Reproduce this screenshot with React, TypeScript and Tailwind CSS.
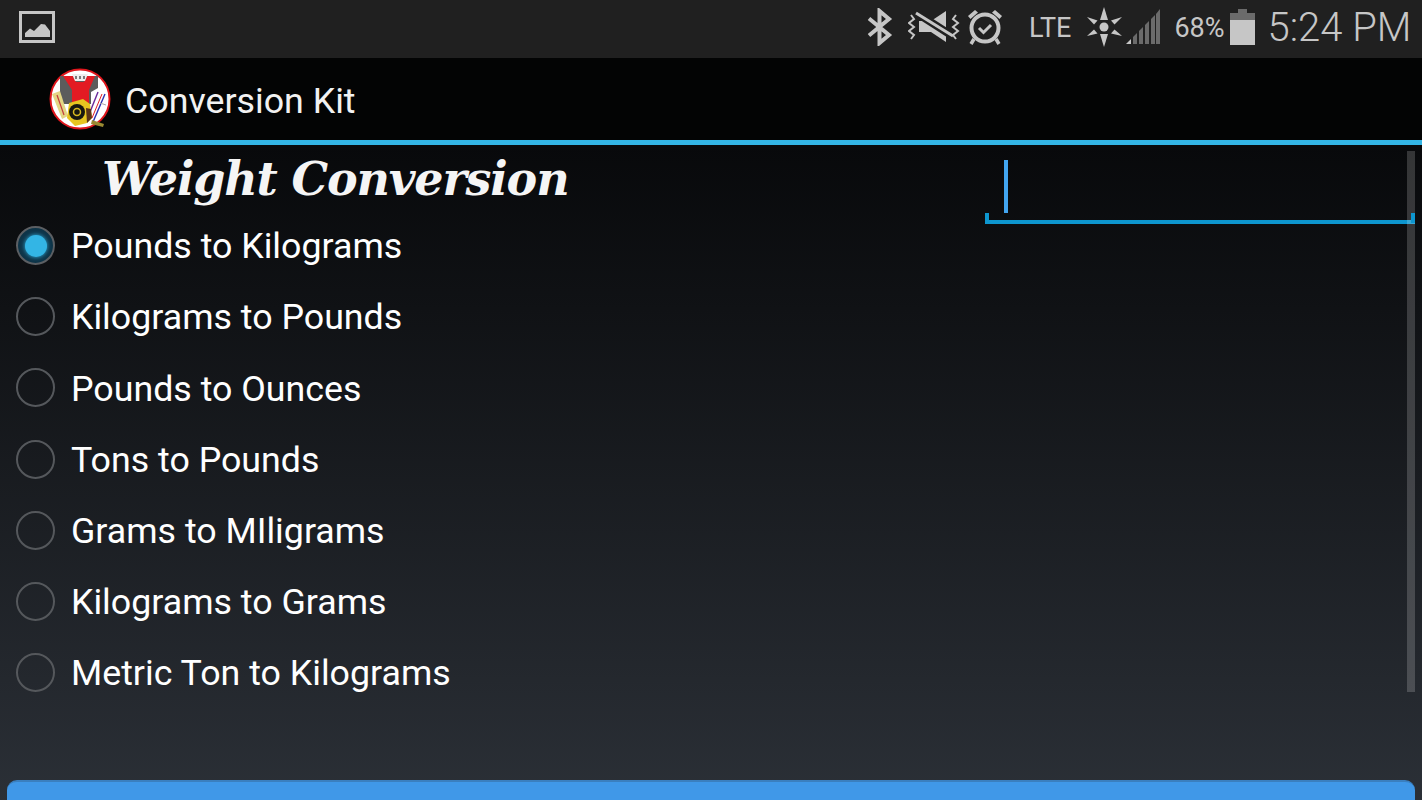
const options = [
  "Pounds to Kilograms",
  "Kilograms to Pounds",
  "Pounds to Ounces",
  "Tons to Pounds",
  "Grams to MIligrams",
  "Kilograms to Grams",
  "Metric Ton to Kilograms",
];

function ImageIcon() {
  return (
    <svg width="36" height="32" viewBox="0 0 36 32" className="block">
      <rect x="1.5" y="1.5" width="33" height="29" fill="none" stroke="#c6c6c6" strokeWidth="3" />
      <path d="M6 26V22L11 17.5L15 20L22 13L26 13.5L31 20V26Z" fill="#c6c6c6" />
    </svg>
  );
}

function BluetoothIcon() {
  return (
    <svg width="26" height="38" viewBox="0 0 26 38" className="block">
      <path
        d="M2 10.5L22 27L12.5 35V3L22 11L2 27.5"
        fill="none"
        stroke="#c6c6c6"
        strokeWidth="4"
      />
    </svg>
  );
}

function MuteVibrateIcon() {
  return (
    <svg width="52" height="32" viewBox="0 0 52 32" className="block">
      <path d="M11 10H23L38 0V31L23 21H11Z" fill="#c6c6c6" />
      <path d="M7 1L46 26" stroke="#202020" strokeWidth="8" />
      <path d="M8 2L45 25" stroke="#c6c6c6" strokeWidth="3" />
      <path
        d="M3 4L6 8L1 12L6 16L1 20L6 24L3 28"
        fill="none"
        stroke="#c6c6c6"
        strokeWidth="2"
      />
      <path
        d="M48 4L45 8L50 12L45 16L50 20L45 24L48 28"
        fill="none"
        stroke="#c6c6c6"
        strokeWidth="2"
      />
    </svg>
  );
}

function AlarmIcon() {
  return (
    <svg width="36" height="38" viewBox="0 0 36 38" className="block">
      <circle cx="18" cy="20" r="13.5" fill="none" stroke="#c6c6c6" strokeWidth="4" />
      <path d="M1 8L8 2L11 4.5L3.5 11Z" fill="#c6c6c6" />
      <path d="M35 8L28 2L25 4.5L32.5 11Z" fill="#c6c6c6" />
      <path d="M12 20L16.5 24.5L24 17" fill="none" stroke="#c6c6c6" strokeWidth="3" />
      <path d="M7 31L4 36M29 31L32 36" stroke="#c6c6c6" strokeWidth="3.5" />
    </svg>
  );
}

function SunIcon() {
  return (
    <svg width="36" height="40" viewBox="0 0 36 40" className="block">
      <circle cx="17" cy="20" r="4.5" fill="#c6c6c6" />
      <path d="M17 0L21 13H13Z" fill="#c6c6c6" />
      <path d="M17 40L21 27H13Z" fill="#c6c6c6" />
      <path d="M0 10L10.5 13.5L7 17.5Z" fill="#c6c6c6" />
      <path d="M35 10L24 13.5L27.5 17.5Z" fill="#c6c6c6" />
      <path d="M0 29L7 22.5L10.5 26.5Z" fill="#c6c6c6" />
      <path d="M35 29L27.5 22.5L24 26.5Z" fill="#c6c6c6" />
    </svg>
  );
}

function SignalIcon() {
  return (
    <svg width="34" height="36" viewBox="0 0 34 36" className="block">
      <path d="M0 35L5 30V35Z" fill="#c6c6c6" />
      <path d="M7 28L11 24V35H7Z" fill="#6b6b6b" />
      <path d="M13 22L17 18V35H13Z" fill="#6b6b6b" />
      <path d="M19 16L23 12V35H19Z" fill="#6b6b6b" />
      <path d="M25 10L29 6V35H25Z" fill="#6b6b6b" />
      <path d="M30 5L34 0V35H30Z" fill="#6b6b6b" />
    </svg>
  );
}

function BatteryIcon() {
  return (
    <svg width="25" height="36" viewBox="0 0 25 36" className="block">
      <path d="M8 0H17V4H25V11H0V4H8Z" fill="#6b6b6b" />
      <rect x="0" y="11" width="25" height="25" fill="#c6c6c6" />
    </svg>
  );
}

function AppLogo() {
  return (
    <svg width="62" height="62" viewBox="0 0 62 62" className="block">
      <circle cx="31" cy="31" r="29.5" fill="#fff" stroke="#e0161c" strokeWidth="2" />
      {/* scale body */}
      <path d="M11 8H49V36H11Z" fill="#5c5c5c" />
      <path d="M14 8H24L27 14H35L38 8H46L40 22V36H23V22Z" fill="#e31b23" />
      <path d="M23 6H39L36 13H26Z" fill="#eeeeee" />
      <path d="M27 8V11M31 8V11M35 8V11" stroke="#555" strokeWidth="1.5" />
      <path d="M49 20V36H42V24Z" fill="#fff" />
      {/* thermometer */}
      <path d="M3 26L11 23L19 48L13 51Z" fill="#e4d684" />
      <path d="M8 27L15 47" stroke="#c23c3c" strokeWidth="1.2" />
      {/* rulers */}
      <path d="M49 24L41 44" stroke="#6a2a9a" strokeWidth="1.4" />
      <path d="M56 26L44 54" stroke="#2a2fb0" strokeWidth="1.4" />
      <path d="M53 26L43 50" stroke="#e01d25" strokeWidth="1" />
      <path d="M51 35L57 37" stroke="#aaa" strokeWidth="1" />
      {/* tape measure */}
      <path d="M43 52L55 56L54 59L42 56Z" fill="#9a8a32" />
      <path d="M20 35L34 31L41 36L43 50L38 55L26 58L18 50Z" fill="#e7c520" />
      <circle cx="28" cy="44" r="8" fill="#181710" />
      <circle cx="28" cy="44" r="3.5" fill="none" stroke="#d8b920" strokeWidth="1.5" />
      <path d="M37 40L42 41L43 50L38 55Z" fill="#5a3418" />
    </svg>
  );
}

function RadioRow({ label, checked }: { label: string; checked: boolean }) {
  return (
    <div className="flex h-[71.2px] items-center">
      <div
        className={
          checked
            ? "ml-4 flex h-[39px] w-[39px] items-center justify-center rounded-full border-2 border-[#5c5f63] bg-[#0e3448]"
            : "ml-4 h-[39px] w-[39px] rounded-full border-2 border-[#55585c]"
        }
      >
        {checked && (
          <div className="h-[22px] w-[22px] rounded-full bg-[#33b5e5] shadow-[0_0_4px_#33b5e5]" />
        )}
      </div>
      <span className="ml-[16px] mt-[3px] whitespace-nowrap font-['Roboto',sans-serif] text-[35.75px] text-white">
        {label}
      </span>
    </div>
  );
}

export default function App() {
  return (
    <div className="flex h-[800px] w-[1422px] flex-col overflow-hidden bg-black font-['Roboto',sans-serif]">
      <div className="flex h-[58px] shrink-0 items-center bg-[#202020] pb-[4px] pl-[19px] text-[#c6c6c6]">
        <ImageIcon />
        <div className="ml-[812px]">
          <BluetoothIcon />
        </div>
        <div className="ml-[15px]">
          <MuteVibrateIcon />
        </div>
        <div className="ml-[7px]">
          <AlarmIcon />
        </div>
        <span className="ml-[26px] mt-[2px] text-[27px] leading-none">LTE</span>
        <div className="ml-[16px]">
          <SunIcon />
        </div>
        <div className="ml-[3px]">
          <SignalIcon />
        </div>
        <span className="ml-[14px] mt-[2px] text-[27px] leading-none">68%</span>
        <div className="ml-[5px]">
          <BatteryIcon />
        </div>
        <span className="ml-[13px] mt-[2px] whitespace-nowrap text-[40px] font-light leading-none">
          5:24 PM
        </span>
      </div>

      <div className="flex h-[82px] shrink-0 items-center bg-[#030404] pl-[49px]">
        <AppLogo />
        <span className="ml-[14px] mt-[5px] text-[35.75px] text-[#f2f2f2]">Conversion Kit</span>
      </div>
      <div className="h-[5px] shrink-0 bg-[#33b5e5]" />

      <div className="relative flex flex-1 flex-col bg-gradient-to-b from-[#08090b] to-[#2c3138]">
        <div className="flex h-[635px] justify-between">
          <div>
            <h1 className="h-[65px] whitespace-nowrap pl-[102px] pt-[1px] font-['DejaVu_Serif',serif] text-[46px] font-bold italic leading-[66px] tracking-[-1.15px] text-[#f5f5f5]">
              Weight Conversion
            </h1>
            {options.map((option, i) => (
              <RadioRow key={option} label={option} checked={i === 0} />
            ))}
          </div>
          <div className="mr-[7px] mt-[15px] flex h-[64px] w-[430px] items-start border-b-4 border-[#0d96cf]">
            <div className="ml-[19px] h-[53px] w-[4px] bg-[#42a5f0]" />
          </div>
        </div>
        <div className="mx-[7px] h-[40px] rounded-t-[10px] border-t-2 border-[#3a7fbf] bg-[#4098e8]" />
        <div className="absolute left-[1407px] top-[6px] h-[541px] w-[8px] bg-white/[0.18]" />
        <div className="absolute left-[985px] top-[68px] h-[10px] w-[4px] bg-[#0d96cf]" />
        <div className="absolute left-[1411px] top-[68px] h-[10px] w-[4px] bg-[#0d96cf]" />
      </div>
    </div>
  );
}
